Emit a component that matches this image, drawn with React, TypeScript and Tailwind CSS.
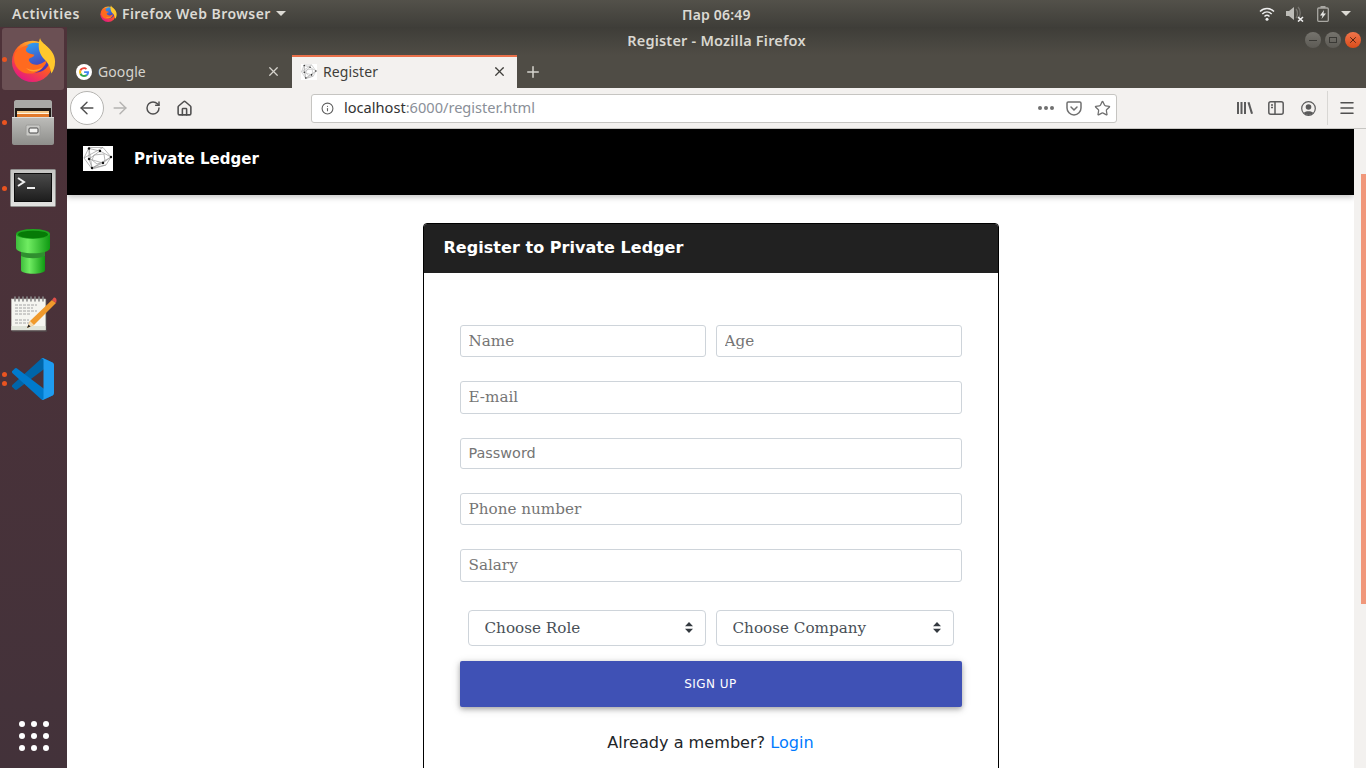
import React from 'react';
import { ArrowLeft, ArrowRight, RotateCw, Home, Info, Star, X, Plus, Menu } from 'lucide-react';

const ubuntu = "font-['Noto_Sans',sans-serif]";
const dejavu = "font-['DejaVu_Sans',sans-serif]";

const FirefoxLogo = ({ size, id }: { size: number; id: string }) => (
  <svg width={size} height={size} viewBox="0 0 48 48">
    <defs>
      <linearGradient id={`${id}Body`} x1="0.7" y1="0.1" x2="0.2" y2="0.95">
        <stop offset="0" stopColor="#ffb52e" />
        <stop offset="0.45" stopColor="#ff5b22" />
        <stop offset="1" stopColor="#e31587" />
      </linearGradient>
      <linearGradient id={`${id}Globe`} x1="0.2" y1="0" x2="0.6" y2="1">
        <stop offset="0" stopColor="#2aa4f4" />
        <stop offset="1" stopColor="#4c2fb0" />
      </linearGradient>
    </defs>
    <circle cx="23" cy="26" r="22" fill={`url(#${id}Body)`} />
    <circle cx="26" cy="22" r="16" fill={`url(#${id}Globe)`} />
    <path d="M31 1c1 7 16 11 16 25 0 6-2 10-4 13-1-9-5-13-9-17-4-5-6-13-3-21z" fill="#ffc82c" />
    <path d="M4 18c3-5 9-9 15-9-3 3-4 5-2 7 2 2 5 2 8 3-1 3-5 3-6 5 0 3 5 7 11 5 4-1 6-4 8-3-2 6-9 13-18 13C8 39 1 28 4 18z" fill="#ff6a1f" />
    <path d="M16 33c5 3 12 3 18-1-3 5-13 7-18 1z" fill="#ffa42e" />
  </svg>
);

const GoogleLogo = () => (
  <svg width="16" height="16" viewBox="0 0 48 48">
    <circle cx="24" cy="24" r="24" fill="#fff" />
    <path d="M39 24.5c0-1.2-.1-2.100-.3-3H24.300v5.600h8.300c-.4 2-1.500 3.500-3.100 4.600l4.800 3.700C37.100 32.700 39 29 39 24.500z" fill="#4285f4" />
    <path d="M24.300 39c4.100 0 7.500-1.300 10-3.600l-4.800-3.700c-1.300.9-3 1.500-5.200 1.500-4 0-7.300-2.700-8.500-6.300l-5 3.800C13.300 35.700 18.400 39 24.300 39z" fill="#34a853" />
    <path d="M15.800 26.900c-.6-1.900-.6-3.900 0-5.800l-5-3.800c-2.100 4.200-2.100 9.200 0 13.400l5-3.800z" fill="#fbbc05" />
    <path d="M24.300 15c2.400 0 4.100 1 5.100 1.900l3.800-3.700C30.800 11 27.800 9.500 24.300 9.500c-5.900 0-11 3.300-13.500 7.800l5 3.800c1.200-3.400 4.500-6.100 8.500-6.100z" fill="#ea4335" />
  </svg>
);

const LedgerMark = ({ w, h, stroke }: { w: number; h: number; stroke: string }) => (
  <svg width={w} height={h} viewBox="0 0 30 25" preserveAspectRatio="none" className="bg-white">
    <g fill="none" stroke={stroke} strokeWidth="0.7">
      <path d="M6 1.500 20 1.500 28 11 23 19 9 23 1 12z" />
      <path d="M6 2.500 17 5 28 11 20 17 9 22 6 13z" />
      <path d="M6 13 17 5M9 22 23 19M6 2.500 9 22M1 12 20 1.500M28 11 9 22M6 13 20 17" />
      <path d="M11 9 21 8 22 15 14 18 9 14z" />
    </g>
    <g fill="#111">
      <circle cx="6" cy="2.500" r="1.200" />
      <circle cx="17" cy="5" r="1.200" />
      <circle cx="28" cy="11" r="1.200" />
      <circle cx="20" cy="17" r="1.200" />
      <circle cx="9" cy="22" r="1.200" />
      <circle cx="6" cy="13" r="1.200" />
    </g>
  </svg>
);

const FilesIcon = () => (
  <svg width="42" height="45" viewBox="0 0 42 45">
    <defs>
      <linearGradient id="cabinet" x1="0" y1="0" x2="0" y2="1">
        <stop offset="0" stopColor="#bdbdba" />
        <stop offset="1" stopColor="#8e8e8b" />
      </linearGradient>
    </defs>
    <path d="M2 2c0-1 1-2 2-2h34c1 0 2 1 2 2v38H2z" fill="#a9a9a6" />
    <rect x="3" y="8" width="36" height="10" fill="#1f1a17" />
    <rect x="5" y="11" width="32" height="2" fill="#f5c98a" />
    <rect x="5" y="13" width="32" height="1" fill="#fff3e0" />
    <rect x="5" y="14" width="32" height="4" fill="#e2792a" />
    <path d="M0 17h42v26c0 1-1 2-2 2H2c-1 0-2-1-2-2z" fill="url(#cabinet)" />
    <rect x="0" y="17" width="42" height="1" fill="#dededc" />
    <rect x="14" y="25" width="14" height="11" rx="1.500" fill="#c9c9c6" stroke="#9c9c99" />
    <rect x="17" y="28" width="9" height="5" rx="1" fill="#f2f2f0" stroke="#444" />
  </svg>
);

const TerminalIcon = () => (
  <svg width="46" height="38" viewBox="0 0 46 38">
    <defs>
      <linearGradient id="termFrame" x1="0" y1="0" x2="0" y2="1">
        <stop offset="0" stopColor="#c4c4c2" />
        <stop offset="1" stopColor="#e2e2e0" />
      </linearGradient>
      <linearGradient id="termBg" x1="0" y1="0" x2="0" y2="1">
        <stop offset="0" stopColor="#4a4a4a" />
        <stop offset="1" stopColor="#1d1d1d" />
      </linearGradient>
    </defs>
    <rect x="0.500" y="0.500" width="45" height="37" rx="1" fill="url(#termFrame)" stroke="#8f8f8d" />
    <rect x="4" y="4" width="38" height="29" fill="#0c0c0c" />
    <rect x="5" y="5" width="36" height="27" fill="url(#termBg)" />
    <path d="M8 9l6 4-6 4" fill="none" stroke="#f0f0f0" strokeWidth="2" />
    <rect x="17" y="18" width="8" height="2" fill="#f0f0f0" />
  </svg>
);

const PipeIcon = () => (
  <svg width="34" height="46" viewBox="0 0 34 46">
    <defs>
      <linearGradient id="pipe" x1="0" y1="0" x2="1" y2="0">
        <stop offset="0" stopColor="#3fbf3c" />
        <stop offset="0.35" stopColor="#70ec62" />
        <stop offset="1" stopColor="#0f9a12" />
      </linearGradient>
    </defs>
    <path d="M5 20h24v22c0 5-24 5-24 0z" fill="url(#pipe)" />
    <path d="M5 22h24v6c-6 3-18 3-24 0z" fill="#2f8f2f" />
    <path d="M0 6h34v14c0 7-34 7-34 0z" fill="url(#pipe)" />
    <ellipse cx="17" cy="6" rx="17" ry="5" fill="#1fa61f" />
    <ellipse cx="17" cy="6.500" rx="15" ry="3.800" fill="#067a06" />
  </svg>
);

const EditorIcon = () => (
  <svg width="46" height="36" viewBox="0 0 46 36">
    <rect x="1" y="3" width="35" height="33" rx="1" fill="#555" opacity="0.5" />
    <rect x="0.500" y="3" width="34" height="31" fill="#f5f5f0" stroke="#c9c9c4" strokeWidth="0.600" />
    <rect x="0.500" y="30" width="34" height="4" fill="#dfe3d9" />
    <g stroke="#8b8b8b" strokeWidth="1.600" strokeLinecap="round">
      <path d="M4 1v4M8 1v4M12 1v4M16 1v4M20 1v4M24 1v4M28 1v4M32 1v4" />
    </g>
    <g stroke="#a4a4a4" strokeWidth="1" strokeDasharray="3 1">
      <path d="M4 9h22M4 12h18M4 15h22M4 18h16M4 24h14M4 27h18" />
    </g>
    <path d="M41 4l4 3-22 22-7 3 3-7z" fill="#f09a2c" />
    <path d="M19 25l4 4-7 3z" fill="#f5dcb0" />
    <path d="M16 32l1.500-3.500 2 2z" fill="#222" />
    <path d="M41 4l1.500-2c1-1 3 0 3 2s-.5 3-.5 3z" fill="#e0504a" />
  </svg>
);

const VSCodeIcon = () => (
  <svg width="42" height="42" viewBox="0 0 100 100">
    <path d="M96.500 10.800 75.900.9a6.200 6.200 0 0 0-7.100 1.200L1.300 63.700a4.200 4.200 0 0 0 0 6.200l5.500 5a4.200 4.200 0 0 0 5.300.2L93.300 13.600c2.700-2.100 6.700-.1 6.700 3.300v-.2c0-2.400-1.400-4.700-3.500-5.900z" fill="#0065a9" />
    <path d="M96.500 89.200 75.900 99.100a6.200 6.200 0 0 1-7.100-1.200L1.300 36.300a4.200 4.200 0 0 1 0-6.200l5.500-5a4.200 4.200 0 0 1 5.300-.2l81.200 61.500c2.700 2.100 6.700.1 6.700-3.300v.2c0 2.400-1.400 4.700-3.500 5.900z" fill="#007acc" />
    <path d="M75.900 99.100a6.200 6.200 0 0 1-7.100-1.200c2.300 2.300 6.200.7 6.200-2.600V4.700c0-3.300-3.900-4.900-6.200-2.600a6.200 6.200 0 0 1 7.100-1.200l20.600 9.900c2.100 1 3.500 3.200 3.500 5.600v67.200c0 2.400-1.400 4.600-3.500 5.600z" fill="#1f9cf0" />
  </svg>
);

const Pip = () => <span className="block w-[5px] h-[5px] rounded-full bg-[#e95420]" />;

const DockItem = ({ children, pips = 0, active = false, gap = '' }: { children: React.ReactNode; pips?: number; active?: boolean; gap?: string }) => (
  <div className={`relative flex items-center justify-center mx-[2px] w-[62px] h-[62px] rounded-[3px] ${gap} ${active ? 'bg-[#6b5054]' : ''}`}>
    <div className="absolute left-[0px] top-0 bottom-0 flex flex-col justify-center gap-[4px]">
      {Array.from({ length: pips }).map((_, i) => <Pip key={i} />)}
    </div>
    {children}
  </div>
);

const Dock = () => (
  <aside className="w-[67px] shrink-0 bg-gradient-to-b from-[#4e3239] to-[#43323a] flex flex-col pt-[1px]">
    <DockItem active pips={1}><FirefoxLogo size={45} id="dockFx" /></DockItem>
    <DockItem pips={1} gap="mt-[1px]"><FilesIcon /></DockItem>
    <DockItem pips={1} gap="mt-[4px]"><TerminalIcon /></DockItem>
    <DockItem gap="mt-[1px]"><PipeIcon /></DockItem>
    <DockItem gap="mt-[1px] pl-[2px]"><EditorIcon /></DockItem>
    <DockItem pips={2} gap="mt-[3px]"><VSCodeIcon /></DockItem>
    <div className="mt-auto mb-[17px] mx-auto grid grid-cols-3 gap-[6px]">
      {Array.from({ length: 9 }).map((_, i) => <span key={i} className="w-[6px] h-[6px] rounded-full bg-white" />)}
    </div>
  </aside>
);

const TopBar = () => (
  <header className={`${ubuntu} h-[27px] shrink-0 bg-gradient-to-b from-[#53514a] to-[#3f3e39] flex items-center text-[14px] text-[#dcdad4] relative`}>
    <span className="ml-[12px] font-semibold tracking-[0.55px]">Activities</span>
    <span className="ml-[20px] flex"><FirefoxLogo size={17} id="barFx" /></span>
    <span className="ml-[5px] font-semibold tracking-[0.45px]">Firefox Web Browser</span>
    <span className="ml-[5px] w-0 h-0 border-x-[5px] border-x-transparent border-t-[5px] border-t-[#dcdad4]" />
    <span className="absolute left-[682px] top-[4px] font-semibold tracking-[0.2px]">Пар 06:49</span>
    <div className="ml-auto mr-[15px] flex items-center">
      <svg width="16" height="14" viewBox="0 0 16 14" fill="none" stroke="#eee" strokeWidth="1.500">
        <path d="M1 4.500c4-4 10-4 14 0M3.300 7c2.800-2.700 6.600-2.700 9.400 0M5.500 9.500c1.500-1.400 3.500-1.400 5 0" />
        <circle cx="8" cy="12.300" r="1.500" fill="#eee" stroke="none" />
      </svg>
      <svg width="18" height="16" viewBox="0 0 18 16" className="ml-[11px]">
        <path d="M0 5h3l5-4v13l-5-4H0z" fill="#bdbcb7" />
        <path d="M10 3c2 2 2 7 0 9M12 1c3 3 3 9 0 12" fill="none" stroke="#77756f" strokeWidth="1.300" />
        <path d="M12 11l5 4.500M17 11l-5 4.500" stroke="#eee" strokeWidth="1.600" />
      </svg>
      <svg width="12" height="16" viewBox="0 0 12 16" className="ml-[13px]">
        <rect x="0.700" y="2" width="10.600" height="13.300" rx="1" fill="none" stroke="#a9a8a3" strokeWidth="1.300" />
        <rect x="3.500" y="0" width="5" height="2" fill="#a9a8a3" />
        <path d="M7 4 3 9.500h2.500L4.500 13 9 7.500H6.500z" fill="#e6e6e3" />
      </svg>
      <span className="ml-[12px] w-0 h-0 border-x-[5px] border-x-transparent border-t-[5px] border-t-[#dcdad4]" />
    </div>
  </header>
);

const WinButton = ({ children, close = false }: { children: React.ReactNode; close?: boolean }) => (
  <span className={`w-[16px] h-[16px] rounded-full flex items-center justify-center ${close ? 'bg-gradient-to-b from-[#f0744a] to-[#d94c17]' : 'bg-gradient-to-b from-[#76746e] to-[#5c5a54]'}`}>
    {children}
  </span>
);

const TitleBar = () => (
  <div className={`${ubuntu} h-[28px] shrink-0 bg-gradient-to-b from-[#3e3d38] to-[#4f4c45] flex items-center justify-center relative`}>
    <span className="text-[14.5px] font-semibold tracking-[0.2px] text-[#d9d7d0]">Register - Mozilla Firefox</span>
    <div className="absolute right-[5px] top-[5px] flex gap-[4px]">
      <WinButton><span className="w-[8px] h-[1px] bg-[#3a3935]" /></WinButton>
      <WinButton><span className="w-[8px] h-[6px] border border-[#3a3935]" /></WinButton>
      <WinButton close><X size={10} strokeWidth={2} color="#3a1a0c" /></WinButton>
    </div>
  </div>
);

const TabStrip = () => (
  <div className={`${ubuntu} h-[33px] shrink-0 bg-[#4f4c45] flex items-stretch text-[14px] pl-[1px]`}>
    <div className="w-[224px] flex items-center text-[#d6d4ce] pl-[8px] pr-[11px]">
      <GoogleLogo />
      <span className="ml-[6px] tracking-[0.1px]">Google</span>
      <X size={15} className="ml-auto" color="#d6d4ce" />
    </div>
    <div className="w-[225px] flex items-center bg-[#f3f1ef] text-[#3f3e3a] border-t-2 border-[#e9704a] pl-[9px] pr-[10px] pb-[2px]">
      <LedgerMark w={16} h={16} stroke="#999" />
      <span className="ml-[6px] tracking-[0.1px]">Register</span>
      <X size={15} className="ml-auto" color="#3f3e3a" />
    </div>
    <div className="flex items-center pl-[7px]"><Plus size={18} color="#d6d4ce" /></div>
  </div>
);

const LibraryIcon = () => (
  <svg width="16" height="14" viewBox="0 0 16 14" fill="#5b5b5b">
    <rect x="0" y="1" width="2" height="12" />
    <rect x="3.500" y="1" width="2" height="12" />
    <rect x="7" y="1" width="2" height="12" />
    <path d="M10.500 1.500l2-.5 3.500 11.500-2 .5z" />
  </svg>
);

const SidebarIcon = () => (
  <svg width="16" height="14" viewBox="0 0 16 14" fill="none" stroke="#5b5b5b" strokeWidth="1.500">
    <rect x="0.800" y="0.800" width="14.400" height="12.400" rx="2" />
    <path d="M7 1v12M3 4h2M3 6.500h2" />
  </svg>
);

const AccountIcon = () => (
  <svg width="15" height="15" viewBox="0 0 15 15" fill="#5b5b5b">
    <circle cx="7.500" cy="7.500" r="6.800" fill="none" stroke="#5b5b5b" strokeWidth="1.200" />
    <circle cx="7.500" cy="6" r="2.800" />
    <path d="M2.800 12c1-2.500 8.400-2.500 9.400 0-2.500 2.500-6.900 2.500-9.400 0z" />
  </svg>
);

const PocketIcon = () => (
  <svg width="16" height="15" viewBox="0 0 16 15" fill="none" stroke="#707070" strokeWidth="1.500">
    <path d="M1 2.200C1 1.500 1.500 1 2.200 1h11.600c.7 0 1.200.5 1.200 1.200V7c0 3.500-3 7-7 7s-7-3.500-7-7z" />
    <path d="M5 6l3 3 3-3" strokeLinecap="round" />
  </svg>
);

const NavBar = () => (
  <div className={`${ubuntu} h-[41px] shrink-0 bg-[#f3f1ef] border-b border-[#c7c6c3] flex items-center`}>
    <div className="ml-[3px] w-[34px] h-[34px] rounded-full bg-white border border-[#b5b4b1] flex items-center justify-center">
      <ArrowLeft size={20} strokeWidth={1.7} color="#4f4f4f" />
    </div>
    <ArrowRight size={20} strokeWidth={1.7} color="#b4b3b1" className="ml-[6px]" />
    <RotateCw size={16} strokeWidth={2.2} color="#4f4f4f" className="ml-[15px]" />
    <Home size={17} strokeWidth={2.2} color="#4f4f4f" className="ml-[15px]" />
    <div className="ml-[118px] w-[806px] h-[29px] bg-white border border-[#c6c5c2] rounded-[3px] flex items-center text-[14.6px]">
      <Info size={13} color="#5f5f5f" className="ml-[9px]" />
      <span className="ml-[10px] text-[#333]">localhost</span>
      <span className="text-[#8a8f98]">:6000/register.html</span>
      <span className="ml-auto flex gap-[2px]">
        <span className="w-[4px] h-[4px] rounded-full bg-[#707070]" />
        <span className="w-[4px] h-[4px] rounded-full bg-[#707070]" />
        <span className="w-[4px] h-[4px] rounded-full bg-[#707070]" />
      </span>
      <span className="ml-[12px] flex"><PocketIcon /></span>
      <Star size={17} strokeWidth={1.8} color="#707070" className="ml-[12px] mr-[5px]" />
    </div>
    <span className="ml-[120px] flex"><LibraryIcon /></span>
    <span className="ml-[15px] flex"><SidebarIcon /></span>
    <span className="ml-[17px] flex"><AccountIcon /></span>
    <span className="ml-[11px] w-px h-[34px] bg-[#d8d7d4]" />
    <Menu size={18} strokeWidth={2} color="#4f4f4f" className="ml-[10px]" />
  </div>
);

const fieldClass = "w-full border border-[#ced4da] rounded-[3px] bg-white px-[8px] font-['DejaVu_Serif',serif] text-[15.2px] text-[#495057] placeholder:text-[#757575] outline-none";

const Field = ({ placeholder, height }: { placeholder: string; height: string }) => (
  <input type="text" placeholder={placeholder} className={`${fieldClass} ${height}`} />
);

const Chooser = ({ label }: { label: string }) => (
  <div className="relative w-[238px]">
    <select defaultValue={label} className="appearance-none w-full h-[36px] border border-[#ced4da] rounded-[4px] bg-white pl-[16px] font-['DejaVu_Serif',serif] text-[15.2px] text-[#495057] outline-none">
      <option>{label}</option>
    </select>
    <svg width="8" height="11" viewBox="0 0 8 11" fill="#343a40" className="absolute right-[13px] top-[12px]">
      <path d="M4 0l4 4.300H0zM4 11 0 6.700h8z" />
    </svg>
  </div>
);

const RegisterCard = () => (
  <section className={`${dejavu} w-[576px] mx-auto mt-[28px] border border-black rounded-t-[4px] bg-white`}>
    <h2 className="h-[49px] bg-[#212121] pl-[20px] pb-[2px] flex items-center text-[16px] tracking-[0.04px] font-bold text-white rounded-t-[3px]">Register to Private Ledger</h2>
    <form className="px-[36px] pt-[52px] pb-[40px]">
      <div className="flex gap-[10px]">
        <Field placeholder="Name" height="h-[32px]" />
        <Field placeholder="Age" height="h-[32px]" />
      </div>
      <div className="mt-[24px]"><Field placeholder="E-mail" height="h-[33px] pb-[2px]" /></div>
      <div className="mt-[24px]">
        <input type="password" placeholder="Password" className={`${fieldClass} h-[31px] pb-[2px] placeholder:font-['DejaVu_Sans',sans-serif] placeholder:text-[14.4px]`} />
      </div>
      <div className="mt-[24px]"><Field placeholder="Phone number" height="h-[32px]" /></div>
      <div className="mt-[24px]"><Field placeholder="Salary" height="h-[33px] pb-[2px]" /></div>
      <div className="mt-[28px] pl-[8px] flex gap-[10px]">
        <Chooser label="Choose Role" />
        <Chooser label="Choose Company" />
      </div>
      <button type="button" className="mt-[15px] w-full h-[46px] bg-[#3f51b5] rounded-[2px] text-white text-[12px] tracking-[0.45px] shadow-[0_2px_5px_rgba(0,0,0,0.26),0_2px_10px_rgba(0,0,0,0.16)]">SIGN UP</button>
      <p className="mt-[25px] text-center text-[16.1px] leading-[22px] text-[#212529]">
        Already a member? <a className="text-[#007bff]">Login</a>
      </p>
    </form>
  </section>
);

const Page = () => (
  <div className="flex-1 min-h-0 flex bg-white">
    <main className="flex-1 min-w-0 overflow-hidden">
      <nav className={`${dejavu} h-[66px] bg-black flex items-center pl-[16px] pb-[7px] shadow-[0_2px_6px_rgba(0,0,0,0.25)]`}>
        <LedgerMark w={30} h={25} stroke="#999" />
        <span className="ml-[21px] mt-[2px] text-[15px] font-bold text-white">Private Ledger</span>
      </nav>
      <RegisterCard />
    </main>
    <div className="w-[12px] shrink-0 bg-[#f3f1ef] flex justify-end">
      <span className="w-[5px] h-[430px] mt-[45px] bg-[#f0977a]" />
    </div>
  </div>
);

export default function App() {
  return (
    <div className="w-[1366px] h-[768px] overflow-hidden flex flex-col">
      <TopBar />
      <div className="flex-1 min-h-0 flex">
        <Dock />
        <div className="flex-1 min-w-0 flex flex-col">
          <TitleBar />
          <TabStrip />
          <NavBar />
          <Page />
        </div>
      </div>
    </div>
  );
}
